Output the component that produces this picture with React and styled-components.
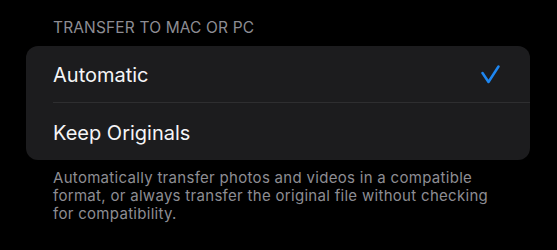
import React from 'react';
import styled, { createGlobalStyle } from 'styled-components';

const GlobalStyle = createGlobalStyle`
	html, body {
		margin: 0;
		padding: 0;
		background: #000;
	}
	body {
		font-family: Inter, "Noto Sans", sans-serif;
		-webkit-font-smoothing: antialiased;
	}
`;

const Page = styled.div`
	width: 557px;
	height: 250px;
	box-sizing: border-box;
	padding: 18px 27px 0 26px;
	display: flex;
	flex-direction: column;
	background: #000;
`;

const SectionHeader = styled.div`
	padding-left: 27px;
	font-size: 15.5px;
	line-height: 20px;
	letter-spacing: 0.15px;
	color: #8d8d93;
	text-transform: uppercase;
	margin-bottom: 8px;
`;

const Card = styled.div`
	background: #1c1c1e;
	border-radius: 12px;
	overflow: hidden;
	display: flex;
	flex-direction: column;
`;

const Row = styled.div`
	height: 57px;
	padding-left: 27px;
	display: flex;
	align-items: stretch;
`;

const RowInner = styled.div`
	flex: 1;
	display: flex;
	align-items: center;
	justify-content: space-between;
	padding-right: 30px;
	border-bottom: ${(p) => (p.$last ? 'none' : '1px solid #2e2e30')};
`;

const Label = styled.span`
	font-size: 20px;
	color: #f5f5f7;
	padding-top: 2px;
`;

const Footer = styled.p`
	margin: 9px 0 0;
	padding-left: 27px;
	padding-right: 25px;
	font-size: 15px;
	line-height: 18px;
	letter-spacing: 0.3px;
	color: #8d8d93;
`;

const Check = () => (
	<svg width="20" height="20" viewBox="0 0 20 20" fill="none">
		<path d="M2.5 9 L8.5 18 L18.5 2.5" stroke="#1e86f0" strokeWidth="2.5" strokeLinecap="round" strokeLinejoin="round" />
	</svg>
);

const options = [
	{ label: 'Automatic', selected: true },
	{ label: 'Keep Originals', selected: false },
];

export default function App() {
	return (
		<>
			<GlobalStyle />
			<Page>
				<SectionHeader>Transfer to Mac or PC</SectionHeader>
				<Card>
					{options.map((o, i) => (
						<Row key={o.label}>
							<RowInner $last={i === options.length - 1}>
								<Label>{o.label}</Label>
								{o.selected && <Check />}
							</RowInner>
						</Row>
					))}
				</Card>
				<Footer>
					Automatically transfer photos and videos in a compatible format, or always transfer the original file without checking for compatibility.
				</Footer>
			</Page>
		</>
	);
}
